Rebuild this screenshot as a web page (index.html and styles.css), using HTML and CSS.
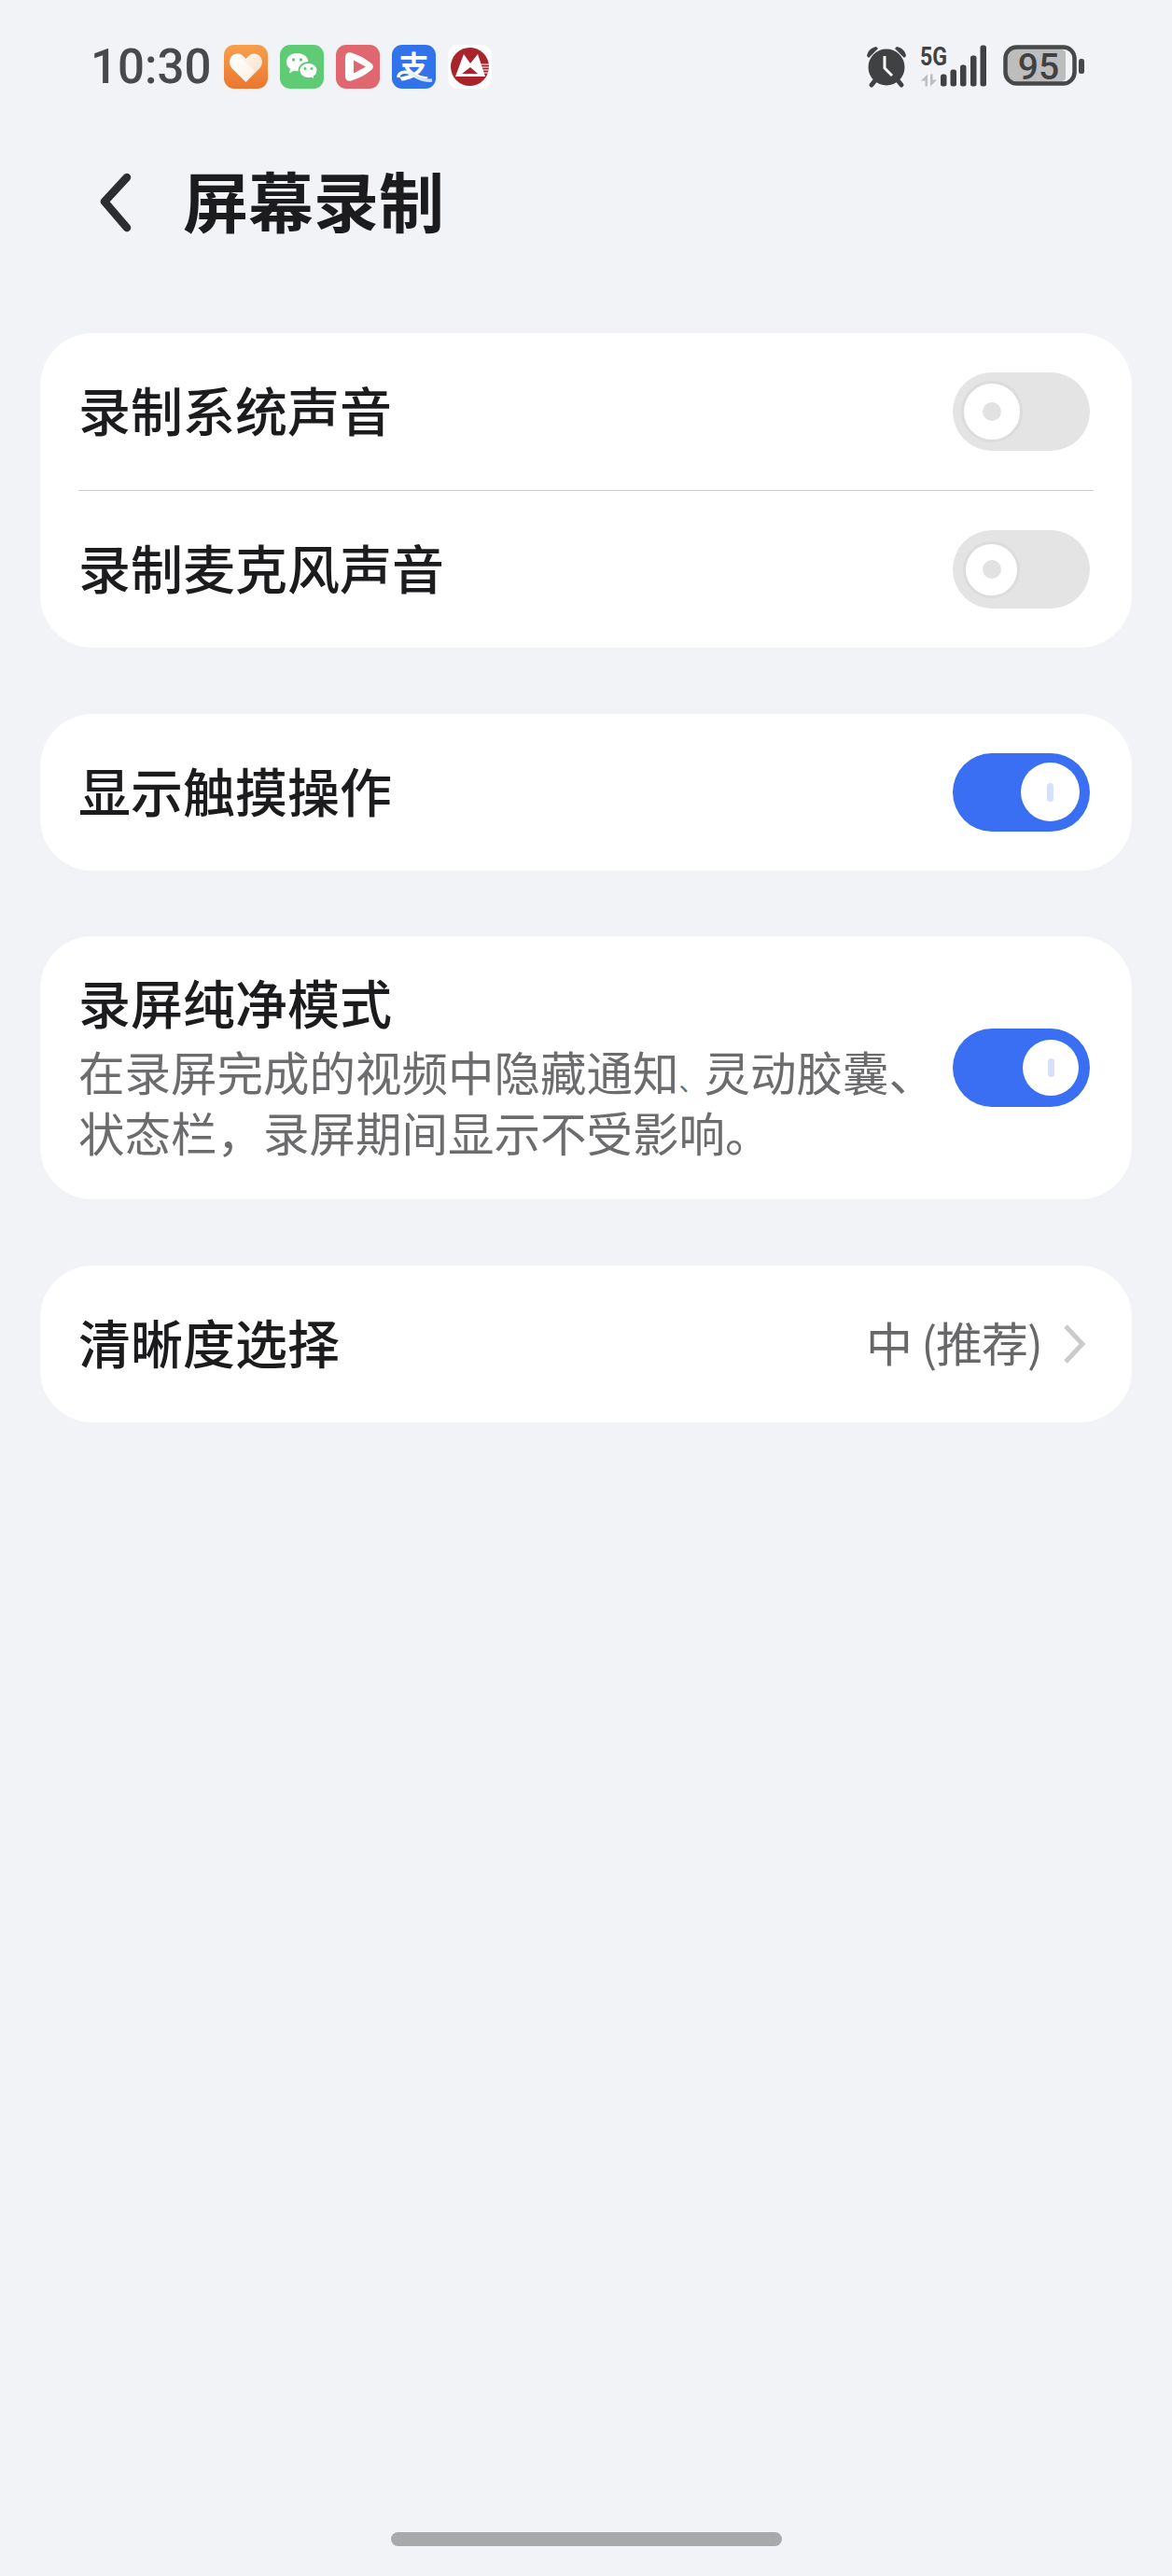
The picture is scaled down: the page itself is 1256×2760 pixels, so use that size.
FILE: index.html
```html
<!DOCTYPE html>
<html lang="zh-CN">
<head>
    <meta charset="UTF-8">
    <meta name="viewport" content="width=device-width, initial-scale=1.0">
    <title>屏幕录制</title>
    <link rel="stylesheet" href="styles.css">
</head>
<body>
    <div class="status-bar">
        <div class="status-left">
            <span class="clock">10:30</span>
            <!-- app notification icons -->
            <svg class="app-icon" viewBox="0 0 47 47">
                <defs>
                    <linearGradient id="orange" x1="0" y1="0" x2="0" y2="1"><stop offset="0" stop-color="#f6a04c"/><stop offset="1" stop-color="#ec7630"/></linearGradient>
                    <linearGradient id="heart" x1="0" y1="0" x2="1" y2="1"><stop offset="0" stop-color="#fff"/><stop offset="1" stop-color="#f9d9bd"/></linearGradient>
                </defs>
                <rect width="47" height="47" rx="11" fill="url(#orange)"/>
                <path d="M23.5 40 L8.5 25 C3 18 7.5 9.5 14.5 9.5 C18 9.5 21 11.5 23.5 15 C26 11.5 29 9.5 32.5 9.5 C39.5 9.5 44 18 38.5 25 Z" fill="url(#heart)"/>
                <path d="M14 10 L33 28 L23.5 40 L8.5 25 C4.5 19 8 10 14 10 Z" fill="#fff" opacity=".55"/>
            </svg>
            <svg class="app-icon" viewBox="0 0 47 47">
                <rect width="47" height="47" rx="11" fill="#5fcb74"/>
                <path d="M18.5 9 C11 9 7 13.6 7 18.6 C7 21.8 8.6 24.2 11 25.8 L10 30.5 L15 27.8 C16.4 28.2 17.5 28.3 19 28.3 C25.5 28.3 30.5 24 30.5 18.6 C30.5 13.4 25.5 9 18.5 9 Z" fill="#fff"/>
                <path d="M30.5 19 C24.5 19 20.5 23 20.5 27.5 C20.5 32.2 24.5 36 30.5 36 C31.6 36 32.5 35.9 33.5 35.6 L37.5 38 L36.8 34 C39 32.4 40.5 30.1 40.5 27.5 C40.5 23 36.5 19 30.5 19 Z" fill="#fff" stroke="#5fcb74" stroke-width="2"/>
                <circle cx="14.5" cy="16" r="1.7" fill="#5fcb74"/>
                <circle cx="22.5" cy="16" r="1.7" fill="#5fcb74"/>
                <circle cx="27" cy="25.5" r="1.5" fill="#5fcb74"/>
                <circle cx="34" cy="25.5" r="1.5" fill="#5fcb74"/>
            </svg>
            <svg class="app-icon" viewBox="0 0 47 47">
                <rect width="47" height="47" rx="11" fill="#e0666f"/>
                <path d="M10 13 C10 9 13 7.5 16.5 8.5 C25 11 32 15 38 20 C40.5 22.2 40.5 25 38 27 C32 32 25 36 16.5 38.5 C13 39.5 10 38 10 34 Z" fill="#fff"/>
                <path d="M19 16.5 L32 23.5 L19 30.5 Z" fill="#e0666f"/>
            </svg>
            <div class="app-icon alipay">
                <span class="alipay-char">支</span>
                <svg class="alipay-swoosh" viewBox="0 0 47 47">
                    <defs>
                        <linearGradient id="swoosh" x1="0" y1="0" x2="1" y2="0"><stop offset="0" stop-color="#fff"/><stop offset="1" stop-color="#c5dafa"/></linearGradient>
                    </defs>
                    <path d="M7 35 C7 29 14 28 20 31 C26 34 32 39 43 38" fill="none" stroke="url(#swoosh)" stroke-width="3.5"/>
                </svg>
            </div>
            <svg class="app-icon" viewBox="0 0 47 47">
                <rect width="47" height="47" rx="11" fill="#fff"/>
                <circle cx="23.5" cy="23.5" r="20.5" fill="#a8232c"/>
                <path d="M8 34 L17 10 L24 20 L32 10 L40 34 Z" fill="#fff"/>
                <path d="M15 31 L24 24 L32 31 Z" fill="#a8232c"/>
                <path d="M34 21 H45 M35 24 H45 M36 27 H45 M37 30 H44" stroke="#fff" stroke-width="1"/>
            </svg>
        </div>
        <div class="status-right">
            <svg class="icon-alarm" viewBox="0 0 44 47">
                <path d="M1 12 C2 6 6 3 11 2 L13 4 L3 14 Z" fill="#404143"/>
                <path d="M43 12 C42 6 38 3 33 2 L31 4 L41 14 Z" fill="#404143"/>
                <circle cx="22" cy="24" r="19.5" fill="#404143"/>
                <path d="M6 43 L10 38 M38 43 L34 38" stroke="#404143" stroke-width="5" stroke-linecap="round"/>
                <path d="M20 12 V25 L28 33" fill="none" stroke="#fff" stroke-width="3"/>
            </svg>
            <svg class="icon-signal" viewBox="0 -8 75 63">
                <text class="five-g" x="0" y="22" textLength="29" lengthAdjust="spacingAndGlyphs">5G</text>
                <path d="M1 39 L8 32 V45 H5.5 V39 Z M11 32 H13.5 V38 H18 L11 45 Z" fill="#bcbdbf"/>
                <rect x="22" y="32" width="6.5" height="13" rx="2.5" fill="#404143"/>
                <rect x="32.5" y="27" width="6.5" height="18" rx="2.5" fill="#404143"/>
                <rect x="43" y="22" width="6.5" height="23" rx="2.5" fill="#404143"/>
                <rect x="54" y="12" width="6.5" height="33" rx="2.5" fill="#404143"/>
                <rect x="64.5" y="1" width="6.5" height="44" rx="2.5" fill="#404143"/>
            </svg>
            <svg class="icon-battery" viewBox="0 0 87 47">
                <rect x="3" y="3.5" width="66" height="37" rx="10" fill="#bdbdbe"/>
                <rect x="67" y="3.5" width="6" height="37" fill="#f1f3f6"/>
                <rect x="2.5" y="2.5" width="74" height="39" rx="12" fill="none" stroke="#47484a" stroke-width="4.5"/>
                <rect x="81" y="15" width="6" height="16" rx="2.5" fill="#47484a"/>
                <text class="battery-level" x="38" y="37" text-anchor="middle">95</text>
            </svg>
        </div>
    </div>

    <div class="page-header">
        <svg class="back-arrow" viewBox="0 0 34 64">
            <path d="M29 5 L5 31 L29 59" fill="none" stroke="#2c2d2f" stroke-width="8.5" stroke-linecap="round" stroke-linejoin="round"/>
        </svg>
        <h1 class="page-title">屏幕录制</h1>
    </div>

    <div class="card">
        <div class="row">
            <span class="row-label">录制系统声音</span>
            <div class="toggle"><span class="knob"><span class="knob-dot"></span></span></div>
        </div>
        <div class="divider"></div>
        <div class="row">
            <span class="row-label">录制麦克风声音</span>
            <div class="toggle"><span class="knob knob-small"><span class="knob-dot"></span></span></div>
        </div>
    </div>

    <div class="card">
        <div class="row">
            <span class="row-label">显示触摸操作</span>
            <div class="toggle toggle-on"><span class="knob knob-on"><span class="knob-bar"></span></span></div>
        </div>
    </div>

    <div class="card">
        <div class="row row-tall">
            <div class="row-text">
                <div class="row-label">录屏纯净模式</div>
                <div class="row-desc">在录屏完成的视频中隐藏通知<span class="narrow">、</span>灵动胶囊、<br>状态栏，录屏期间显示不受影响。</div>
            </div>
            <div class="toggle toggle-on"><span class="knob knob-on knob-on-small"><span class="knob-bar"></span></span></div>
        </div>
    </div>

    <div class="card">
        <div class="row">
            <span class="row-label">清晰度选择</span>
            <div class="row-value">
                <span class="value-text">中 (推荐)</span>
                <svg class="chevron" viewBox="0 0 24 44">
                    <path d="M3 3 L21 22 L3 41" fill="none" stroke="#cbcbcd" stroke-width="5"/>
                </svg>
            </div>
        </div>
    </div>

    <div class="home-indicator"></div>
</body>
</html>
```

FILE: styles.css
```css
* {
    box-sizing: border-box;
}

body {
    margin: 0;
    min-height: 2760px;
    display: flex;
    flex-direction: column;
    background-color: #f1f3f6;
    color: #1c1c1e;
    font-family: "Noto Sans CJK SC", "Noto Sans", sans-serif;
}

/* status bar */
.status-bar {
    display: flex;
    justify-content: space-between;
    align-items: center;
    height: 47px;
    margin-top: 48px;
    padding: 0 94px 0 97px;
}

.status-left {
    display: flex;
    align-items: center;
}

.clock {
    width: 143px;
    font-family: Roboto, sans-serif;
    font-size: 51px;
    font-weight: 500;
    color: #48494b;
}

.app-icon {
    width: 47px;
    height: 47px;
    margin-right: 13px;
}

.alipay {
    position: relative;
    display: flex;
    justify-content: center;
    border-radius: 11px;
    background-color: #3273ec;
}

.alipay-char {
    font-size: 32px;
    line-height: 42px;
    font-weight: 700;
    color: #fff;
}

.alipay-swoosh {
    position: absolute;
    top: 0;
    left: 0;
    width: 47px;
    height: 47px;
}

.status-right {
    display: flex;
    align-items: center;
    gap: 14px;
}

.icon-alarm {
    width: 44px;
    height: 47px;
}

/* svg is taller than the row so the 5G label stays inside its box */
.icon-signal {
    width: 75px;
    height: 63px;
    margin: -8px 0;
    transform: translateY(-0.5px);
}

.icon-battery {
    width: 87px;
    height: 47px;
}

.five-g {
    font-family: Roboto, sans-serif;
    font-size: 28px;
    font-weight: 700;
    fill: #404143;
}

.battery-level {
    font-family: Roboto, sans-serif;
    font-size: 39px;
    font-weight: 500;
    fill: #404143;
}

/* title */
.page-header {
    display: flex;
    align-items: center;
    gap: 55px;
    height: 90px;
    margin: 74px 0 98px;
    padding-left: 107px;
}

.back-arrow {
    width: 34px;
    height: 64px;
    margin-top: 6px;
}

.page-title {
    margin: 0;
    font-size: 70px;
    line-height: 90px;
    font-weight: 700;
}

/* cards */
.card {
    margin: 0 43px 70.5px;
    background-color: #fff;
    border-radius: 56px;
}

.row {
    display: flex;
    justify-content: space-between;
    align-items: center;
    height: 168px;
    padding: 0 45px 0 41px;
}

.row > .row-label {
    margin-bottom: 6px;
}

.row-tall {
    height: 282px;
}

.row-text {
    margin-bottom: 5px;
}

.row-label {
    font-size: 56px;
    line-height: 70px;
    font-weight: 500;
}

.row-desc {
    margin-top: 7px;
    font-size: 49.5px;
    line-height: 65px;
    color: #6c6c6e;
}

/* this comma is set tight in the reference */
.narrow {
    font-size: 27px;
    line-height: 1;
}

.divider {
    height: 1px;
    margin: 0 41px;
    background-color: #cdcdcf;
}

.row-value {
    display: flex;
    align-items: center;
    gap: 22px;
    margin-right: 5px;
}

.value-text {
    margin-bottom: 6px;
    font-size: 50px;
    letter-spacing: -1px;
    color: #68686a;
}

.chevron {
    width: 24px;
    height: 44px;
}

/* switches */
.toggle {
    flex-shrink: 0;
    display: flex;
    align-items: center;
    width: 147px;
    height: 84px;
    padding: 0 9px;
    border-radius: 42px;
    background-color: #e4e4e4;
}

.toggle-on {
    justify-content: flex-end;
    padding: 0 11px;
    background-color: #3b6ff3;
}

.knob {
    display: flex;
    align-items: center;
    justify-content: center;
    width: 66px;
    height: 66px;
    border: 3px solid #dcdcdc;
    border-radius: 50%;
    background-color: #fff;
}

.knob-small {
    width: 61px;
    height: 61px;
    margin-left: 2px;
}

.knob-on {
    width: 63px;
    height: 63px;
    border: none;
}

.knob-on-small {
    width: 60px;
    height: 60px;
    margin-right: 1px;
}

.knob-dot {
    width: 20px;
    height: 20px;
    border-radius: 50%;
    background-color: #e2e2e2;
}

.knob-bar {
    width: 7px;
    height: 20px;
    border-radius: 4px;
    background-color: #d7e0fb;
}

/* gesture bar */
.home-indicator {
    align-self: center;
    width: 419px;
    height: 15px;
    margin-top: auto;
    margin-bottom: 32px;
    border-radius: 8px;
    background-color: #a8a9ab;
}
```
